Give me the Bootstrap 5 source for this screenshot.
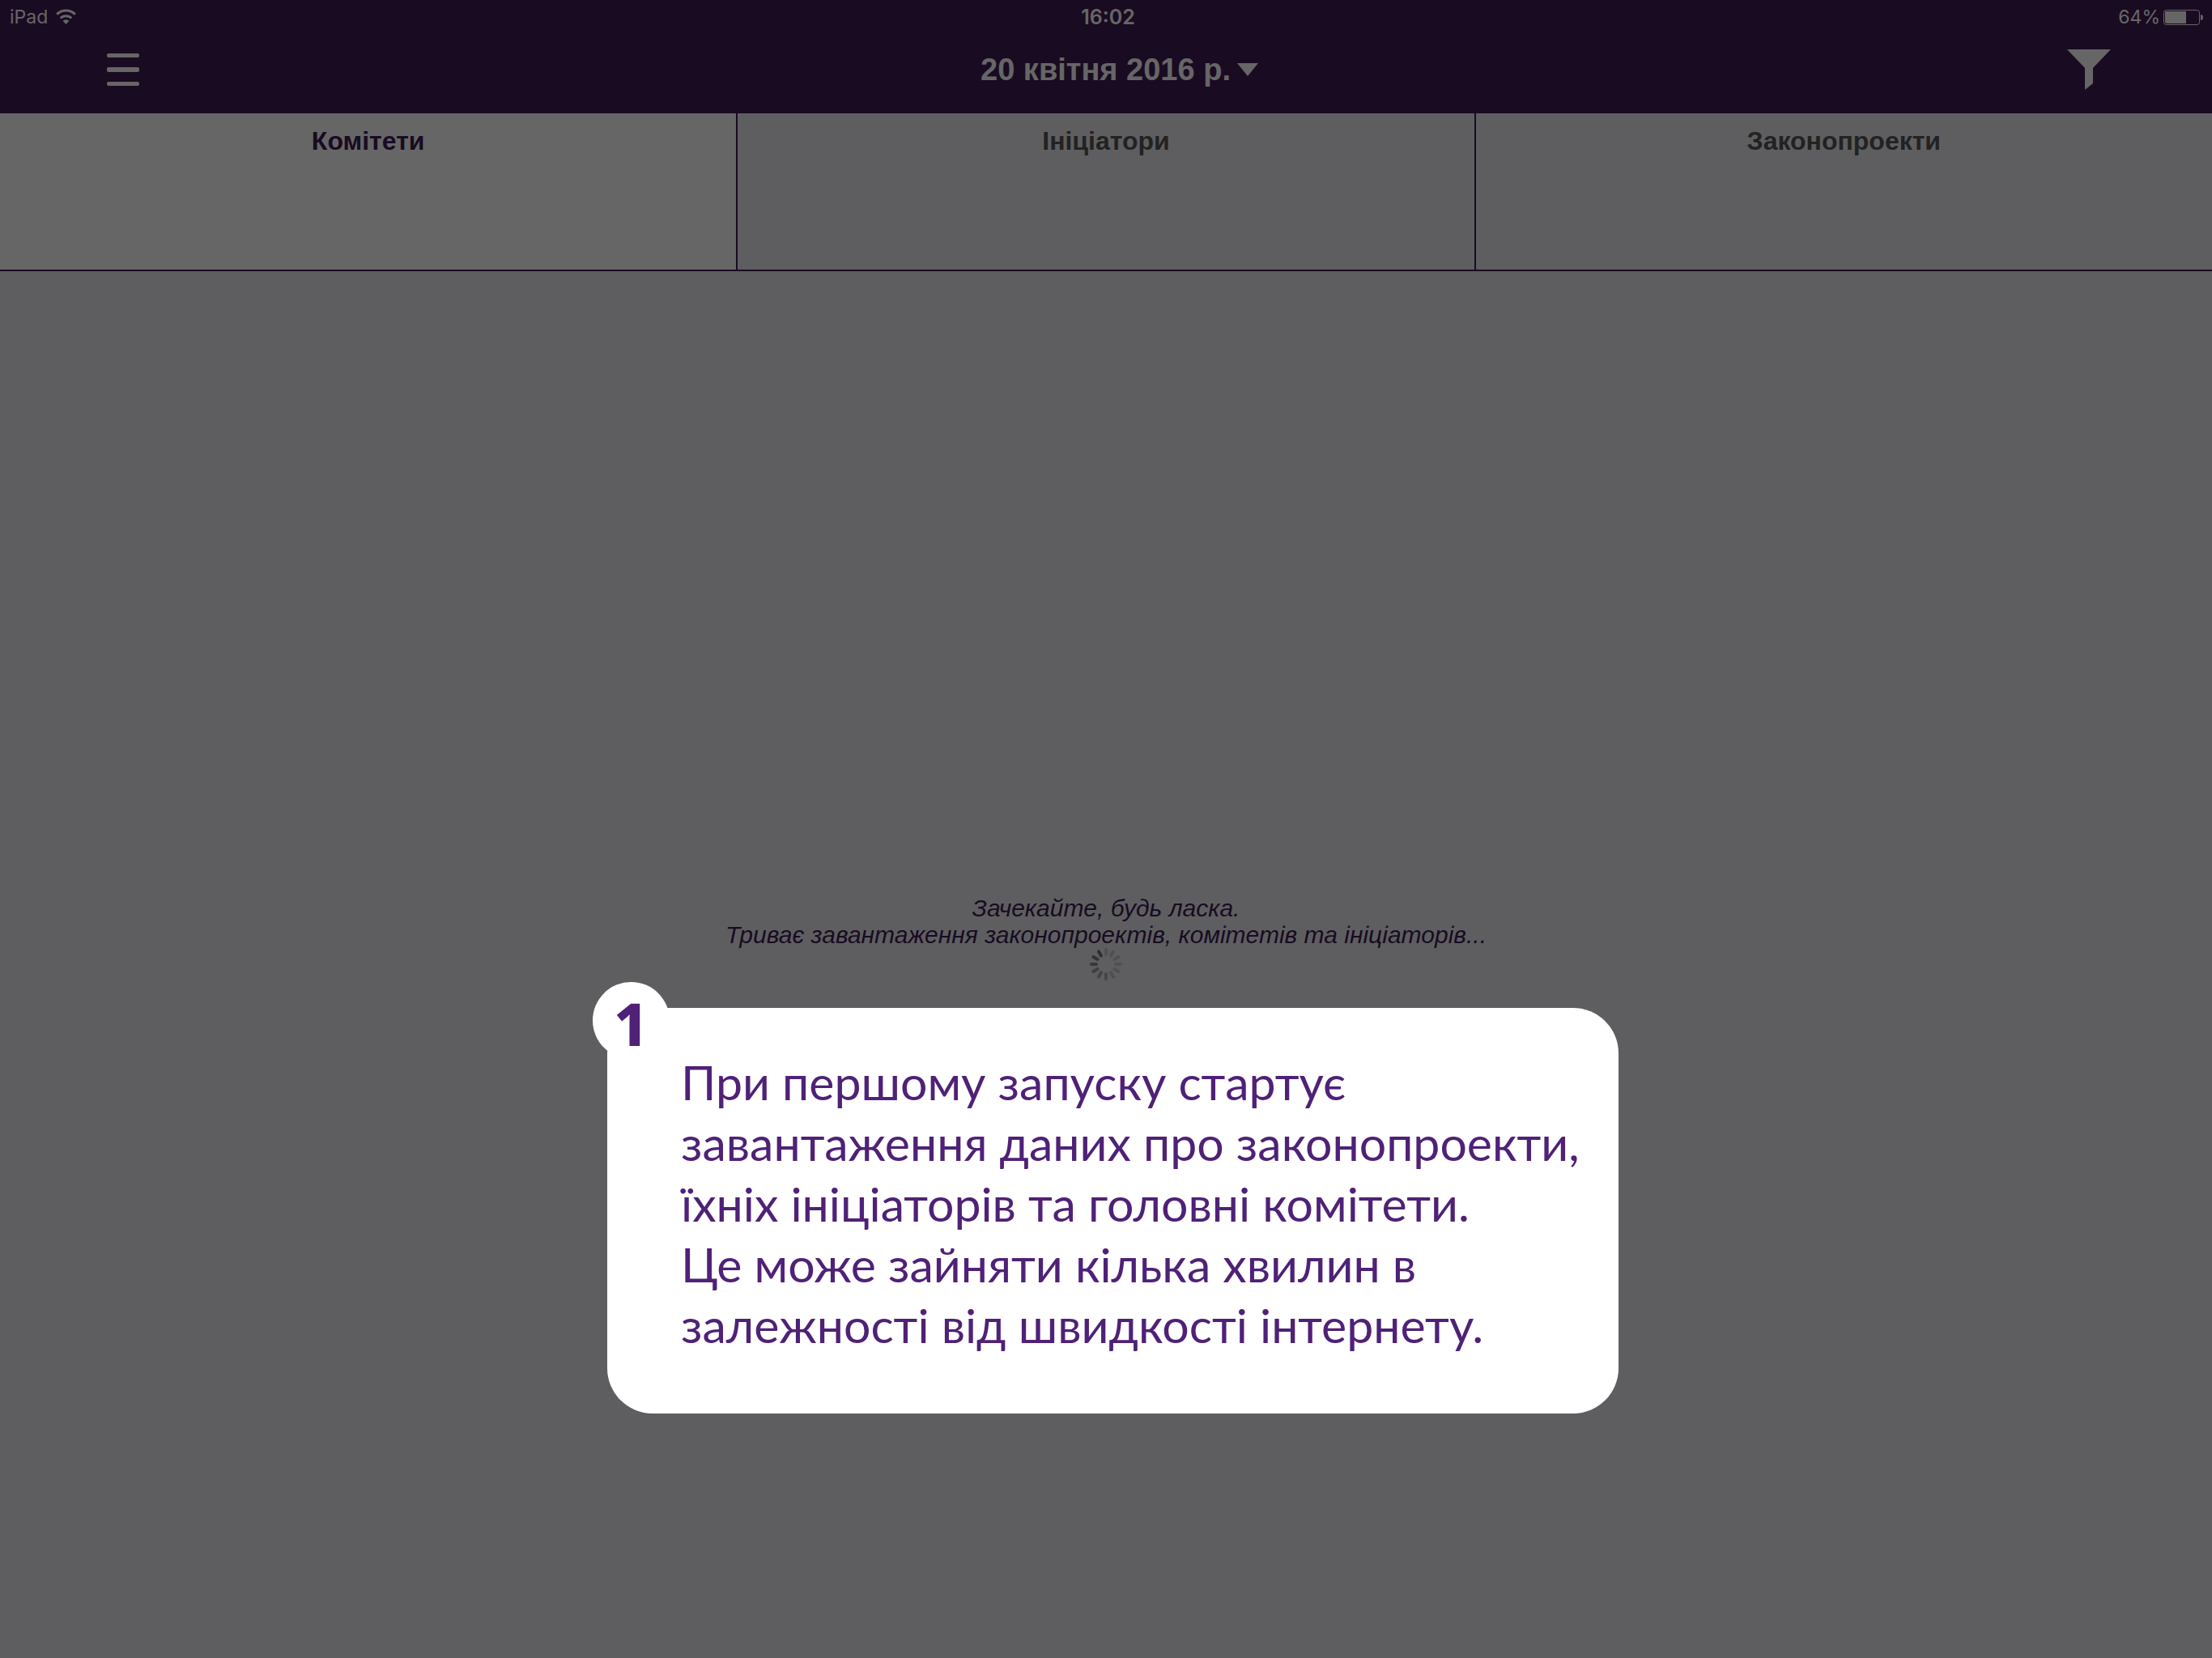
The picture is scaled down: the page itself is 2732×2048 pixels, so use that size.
<!DOCTYPE html>
<html lang="uk">
<head>
<meta charset="utf-8">
<meta name="viewport" content="width=device-width, initial-scale=1">
<title>Законопроекти</title>
<link href="https://cdn.jsdelivr.net/npm/bootstrap@5.3.0/dist/css/bootstrap.min.css" rel="stylesheet">
<style>
  :root { --violet: #3f1c56; --ink: #4f2177; }
  body { font-family: "Liberation Sans", Arial, sans-serif; background: #ebebf0; }
  .topbar { background: var(--violet); color: #fff; height: 140px; }
  .statusline { font: 400 23px/28px Inter, sans-serif; padding: 7px 11px 0 12px; }
  .clock { font-size: 25px; }
  .toolbar-row { padding: 0 125px 3px 132px; height: 105px; }
  .menu-btn { width: 46px; }
  .date-pick { font-size: 38px; line-height: 44px; }
  .date-caret { left: 100%; top: 50%; margin-left: 8px; margin-top: -8px; }
  .tab-strip { border-bottom: 2px solid var(--violet); }
  .tab-item { height: 193px; padding: 15px 0; font-size: 32px; line-height: 38px; color: #555; border-right: 2px solid var(--violet); }
  .tab-item:last-child { border-right: 0; }
  .tab-item.active { background: #fff; color: var(--violet); }
  .loading { padding-bottom: 68px; font-size: 30px; line-height: 33px; color: var(--violet); }
  .dimmer { background: rgba(0, 0, 0, .6); padding: 0 0 302px 17px; }
  .tip { width: 1249px; max-width: 92%; border-radius: 56px; padding: 54px 40px 72px 91px; color: var(--ink); background: #fff;
         font: 400 59px/75px Lato, "Noto Sans", sans-serif; }
  .tip-number { left: -18px; top: -32px; width: 95px; height: 95px; background: #fff; font: 800 74px/101px "Noto Sans", sans-serif; }
  svg { display: block; }
</style>
</head>
<body>
<div class="min-vh-100 d-flex flex-column position-relative">
  <header class="topbar">
    <div class="statusline d-flex">
      <div class="col d-flex align-items-center gap-2"><span>iPad</span>
        <svg width="30" height="20" viewBox="0 0 30 20" fill="none" stroke="#fff" stroke-width="3"><path d="M3.2 6.6a16 16 0 0 1 22.6 0M7.7 11.4a9.8 9.8 0 0 1 13.6 0"/><path d="M14.5 19 10.6 14.8a5.8 5.8 0 0 1 7.8 0z" fill="#fff" stroke="none"/></svg>
      </div>
      <div class="clock fw-semibold ps-1">16:02</div>
      <div class="col d-flex align-items-center justify-content-end gap-1"><span>64%</span>
        <svg width="49" height="19" viewBox="0 0 49 19"><rect x=".5" y=".5" width="44" height="18" rx="3" fill="none" stroke="#fff"/><path d="M2 2h26v15H4a2 2 0 0 1-2-2z" fill="#fff"/><path d="M46 6c4 0 4 7 0 7z" fill="#fff"/></svg>
      </div>
    </div>
    <div class="toolbar-row d-flex align-items-center justify-content-between">
      <button class="menu-btn btn p-0 border-0" type="button" aria-label="Меню">
        <svg width="40" height="40" viewBox="0 0 40 40" fill="#fff"><rect width="40" height="5" rx="2"/><rect y="17" width="40" height="6" rx="2"/><rect y="35" width="40" height="5" rx="2"/></svg>
      </button>
      <button class="date-pick btn p-0 border-0 text-white fw-bold position-relative" type="button">20 квітня 2016 р.<svg class="date-caret position-absolute" width="26" height="16" viewBox="0 0 26 16"><path d="M0 0h26L13 16z" fill="#fff"/></svg></button>
      <button class="btn p-0 border-0" type="button" aria-label="Фільтр">
        <svg width="54" height="50" viewBox="0 0 54 50"><path d="M0 0h54L32 23v19l-10 8V23z" fill="#fff"/></svg>
      </button>
    </div>
  </header>
  <nav class="tab-strip row g-0 text-center fw-bold">
    <a class="tab-item active col text-decoration-none" href="#committees">Комітети</a>
    <a class="tab-item col text-decoration-none" href="#initiators">Ініціатори</a>
    <a class="tab-item col text-decoration-none" href="#bills">Законопроекти</a>
  </nav>
  <main class="loading flex-grow-1 d-flex flex-column align-items-center justify-content-center text-center fst-italic">
    <div>Зачекайте, будь ласка.</div>
    <div>Триває завантаження законопроектів, комітетів та ініціаторів...</div>
    <svg width="40" height="40" viewBox="-20 -20 40 40" stroke="#000" stroke-width="4" stroke-linecap="round">
      <path d="M0-18V-12" opacity=".15"/><path d="M0-18V-12" transform="rotate(30)" opacity=".15"/><path d="M0-18V-12" transform="rotate(60)" opacity=".15"/><path d="M0-18V-12" transform="rotate(90)" opacity=".15"/><path d="M0-18V-12" transform="rotate(120)" opacity=".15"/><path d="M0-18V-12" transform="rotate(150)" opacity=".17"/><path d="M0-18V-12" transform="rotate(180)" opacity=".24"/><path d="M0-18V-12" transform="rotate(210)" opacity=".28"/><path d="M0-18V-12" transform="rotate(240)" opacity=".33"/><path d="M0-18V-12" transform="rotate(270)" opacity=".4"/><path d="M0-18V-12" transform="rotate(300)" opacity=".46"/><path d="M0-18V-12" transform="rotate(330)" opacity=".5"/>
    </svg>
  </main>
  <div class="dimmer position-absolute top-0 start-0 w-100 h-100 d-flex justify-content-center align-items-end">
    <section class="tip position-relative" role="dialog" aria-label="Підказка 1">
      <div class="tip-number position-absolute rounded-circle text-center">1</div>
      При першому запуску стартує<br>завантаження даних про законопроекти,<br>їхніх ініціаторів та головні комітети.<br>Це може зайняти кілька хвилин в<br>залежності від швидкості інтернету.
    </section>
  </div>
</div>
<script src="https://cdn.jsdelivr.net/npm/bootstrap@5.3.0/dist/js/bootstrap.bundle.min.js"></script>
</body>
</html>
